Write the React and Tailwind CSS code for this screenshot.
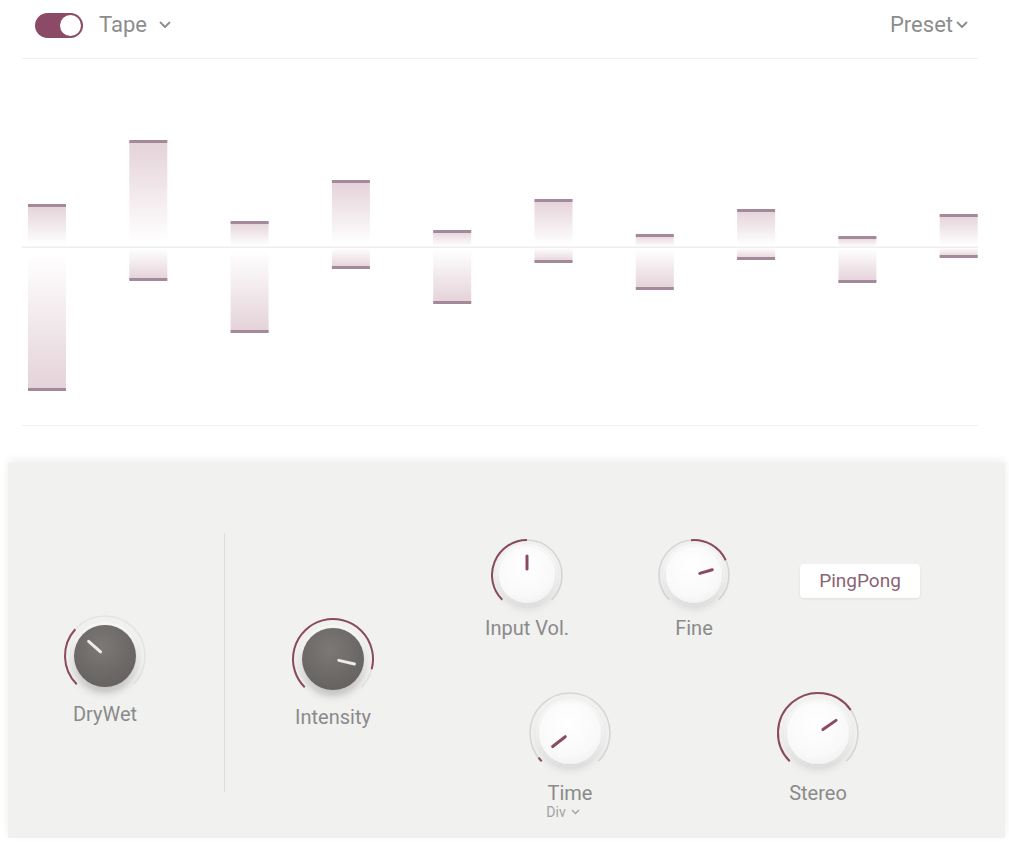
import React from 'react';

const MAROON = '#8b4a62';

// bar extents in page coords [top, bottom]
const bars = [
  [205, 390], [141, 280], [222, 332], [181, 268], [231, 303],
  [200, 262], [235, 289], [210, 259], [237, 282], [215, 257],
];

const CHART_TOP = 59;
const CENTER = 247 - CHART_TOP;

const polar = (c, r, a) => {
  const rad = (a * Math.PI) / 180;
  return [c + r * Math.sin(rad), c - r * Math.cos(rad)];
};

const arc = (c, r, a0, a1) => {
  const [x0, y0] = polar(c, r, a0);
  const [x1, y1] = polar(c, r, a1);
  const large = a1 - a0 > 180 ? 1 : 0;
  return `M ${x0} ${y0} A ${r} ${r} 0 ${large} 1 ${x1} ${y1}`;
};

const Chevron = ({ className = '' }) => (
  <svg width="12" height="8" viewBox="0 0 12 8" className={className}>
    <path d="M1.5 1.5 L6 6 L10.5 1.5" fill="none" stroke="#8d8d8d" strokeWidth="1.8" strokeLinecap="round" strokeLinejoin="round" />
  </svg>
);

function Knob({ id, r, body, dark, from, to, angle, label, sub, labelClass = '' }) {
  const size = r * 2 + 16;
  const c = size / 2;
  const [px0, py0] = polar(c, 6, angle);
  const [px1, py1] = polar(c, body - 9, angle);
  return (
    <div className="flex flex-col items-center">
      <svg width={size} height={size} className="overflow-visible">
        <defs>
          <radialGradient id={`${id}-g`} cx="45%" cy="35%" r="75%">
            {dark ? (
              <>
                <stop offset="0%" stopColor="#7b7876" />
                <stop offset="100%" stopColor="#625f5d" />
              </>
            ) : (
              <>
                <stop offset="0%" stopColor="#ffffff" />
                <stop offset="70%" stopColor="#f9f9f9" />
                <stop offset="100%" stopColor="#eeeeee" />
              </>
            )}
          </radialGradient>
          <filter id={`${id}-s`} x="-50%" y="-50%" width="200%" height="200%">
            <feDropShadow dx="0" dy="5" stdDeviation="4" floodColor="#000" floodOpacity={dark ? 0.25 : 0.14} />
          </filter>
        </defs>
        <path d={arc(c, r, -135, 135)} stroke={dark ? '#e4e4e4' : '#d6d6d6'} strokeWidth="1.6" fill="none" />
        {to > from && (
          <path d={arc(c, r, from, to)} stroke={MAROON} strokeWidth="2" fill="none" />
        )}
        <circle cx={c} cy={c} r={body + 3} fill="#fbfbfb" opacity="0.8" />
        <circle cx={c} cy={c} r={body} fill={`url(#${id}-g)`} filter={`url(#${id}-s)`} />
        <line
          x1={px0}
          y1={py0}
          x2={px1}
          y2={py1}
          stroke={dark ? '#ececec' : MAROON}
          strokeWidth="3"
          strokeLinecap="round"
        />
      </svg>
      <div className={`text-[20px] leading-[20px] text-[#8a8a8a] whitespace-nowrap ${labelClass}`}>{label}</div>
      {sub}
    </div>
  );
}

function Waveform() {
  return (
    <svg width="1009" height="366" className="block">
      <defs>
        <linearGradient id="up" x1="0" y1="0" x2="0" y2="1">
          <stop offset="0%" stopColor="#e4d2d9" />
          <stop offset="95%" stopColor="#ffffff" />
        </linearGradient>
        <linearGradient id="down" x1="0" y1="0" x2="0" y2="1">
          <stop offset="5%" stopColor="#ffffff" />
          <stop offset="100%" stopColor="#e4d2d9" />
        </linearGradient>
      </defs>
      {bars.map(([top, bottom], i) => {
        const x = 28 + i * 101.3;
        const t = top - CHART_TOP;
        const b = bottom - CHART_TOP;
        return (
          <g key={i}>
            <rect x={x} y={t} width="38" height={CENTER - t} fill="url(#up)" />
            <rect x={x} y={CENTER} width="38" height={b - CENTER} fill="url(#down)" />
            <rect x={x} y={t - 1} width="38" height="3" fill="#a3899a" />
            <rect x={x} y={b - 2} width="38" height="3" fill="#a3899a" />
          </g>
        );
      })}
      <rect x="22" y={CENTER - 0.5} width="956" height="1.5" fill="#eeeeee" />
    </svg>
  );
}

export default function App() {
  return (
    <div className="w-[1009px] h-[842px] bg-white overflow-hidden font-['Roboto',sans-serif]">
      {/* Header */}
      <div className="h-[50px] flex items-center justify-between pl-[35px] pr-[41px]">
        <div className="flex items-center">
          <div className="w-[48px] h-[25px] rounded-full bg-[#8b4a66] flex items-center justify-end pr-[2px]">
            <div className="w-[21px] h-[21px] rounded-full bg-white" />
          </div>
          <span className="ml-[16px] text-[22px] leading-none text-[#8d8d8d]">Tape</span>
          <Chevron className="ml-[12px]" />
        </div>
        <div className="flex items-center">
          <span className="text-[22px] leading-none text-[#8d8d8d]">Preset</span>
          <Chevron className="ml-[3px]" />
        </div>
      </div>
      <div className="h-[8px]" />
      <div className="ml-[22px] mr-[31px] h-px bg-[#f0f0f0]" />

      <Waveform />

      <div className="ml-[22px] mr-[31px] h-px bg-[#f0f0f0]" />
      <div className="h-[37px]" />

      {/* Control panel */}
      <div className="ml-[8px] w-[997px] h-[375px] bg-[#f1f1f0] shadow-[0_-3px_8px_rgba(0,0,0,0.07)] flex items-start">
        <div className="w-[194px] pt-[145px] flex justify-center">
          <Knob id="dw" r={40} body={31} dark from={-135} to={-48} angle={-48} label="DryWet" />
        </div>
        <div className="ml-[22px] mt-[70px] w-px h-[259px] bg-[#dddddd]" />
        <div className="w-[216px] pt-[148px] flex justify-center">
          <Knob id="in" r={40} body={31} dark from={-135} to={105} angle={103} label="Intensity" />
        </div>
        <div className="flex flex-col">
          <div className="flex items-start pt-[69px] pl-[36px]">
            <div className="w-[100px] flex justify-center">
              <Knob id="iv" r={35} body={28} from={-135} to={0} angle={0} label="Input Vol." />
            </div>
            <div className="w-[100px] ml-[67px] flex justify-center">
              <Knob id="fi" r={35} body={28} from={-5} to={65} angle={74} label="Fine" />
            </div>
            <button className="ml-[56px] mt-[32px] w-[120px] h-[34px] bg-white rounded-[4px] shadow-[0_1px_3px_rgba(0,0,0,0.08)] text-[19px] text-[#8a6475]">
              PingPong
            </button>
          </div>
          <div className="flex items-start mt-[47px] pl-[79px]">
            <div className="w-[100px] flex justify-center">
              <Knob
                id="ti"
                r={40}
                body={31}
                from={-135}
                to={-128}
                angle={-128}
                label="Time"
                labelClass="mt-[2px]"
                sub={
                  <div className="flex items-center mr-[14px] mt-[1px] text-[14px] leading-[16px] text-[#a3a3a3]">
                    Div
                    <svg width="9" height="6" viewBox="0 0 9 6" className="ml-[5px]">
                      <path d="M1 1 L4.5 4.5 L8 1" fill="none" stroke="#a3a3a3" strokeWidth="1.4" />
                    </svg>
                  </div>
                }
              />
            </div>
            <div className="w-[100px] ml-[148px] flex justify-center">
              <Knob id="st" r={40} body={31} from={-135} to={55} angle={55} label="Stereo" labelClass="mt-[2px]" />
            </div>
          </div>
        </div>
      </div>
    </div>
  );
}
